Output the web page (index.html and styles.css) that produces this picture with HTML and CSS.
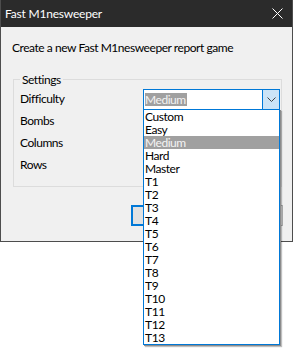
FILE: index.html
```html
<!DOCTYPE html>
<html lang="en">
<head>
    <meta charset="UTF-8">
    <title>Fast M1nesweeper</title>
    <link rel="stylesheet" href="styles.css">
</head>
<body>
    <div class="window">
        <div class="titlebar">
            <span class="title">Fast M1nesweeper</span>
            <svg class="close" width="11" height="11" viewBox="0 0 11 11">
                <path d="M0.5 0.5 L10.5 10.5 M10.5 0.5 L0.5 10.5" stroke="#ffffff" stroke-width="1" fill="none"/>
            </svg>
        </div>

        <div class="content">
            <p class="intro">Create a new Fast M1nesweeper report game</p>

            <div class="settings">
                <span class="legend">Settings</span>
                <div class="row">
                    <label>Difficulty</label>
                    <div class="combo">
                        <div class="combo-value"><span class="selected">Medium</span></div>
                        <div class="combo-button">
                            <svg width="9" height="5" viewBox="0 0 9 5">
                                <path d="M0.5 0.5 L4.5 4.5 L8.5 0.5" stroke="#444444" stroke-width="1" fill="none"/>
                            </svg>
                        </div>
                        <ul class="combo-list">
                            <li>Custom</li>
                            <li>Easy</li>
                            <li class="active">Medium</li>
                            <li>Hard</li>
                            <li>Master</li>
                            <li>T1</li>
                            <li>T2</li>
                            <li>T3</li>
                            <li>T4</li>
                            <li>T5</li>
                            <li>T6</li>
                            <li>T7</li>
                            <li>T8</li>
                            <li>T9</li>
                            <li>T10</li>
                            <li>T11</li>
                            <li>T12</li>
                            <li>T13</li>
                        </ul>
                    </div>
                </div>
                <div class="row"><label>Bombs</label></div>
                <div class="row"><label>Columns</label></div>
                <div class="row"><label>Rows</label></div>
            </div>

            <div class="buttons">
                <button class="btn btn-default">OK</button>
                <button class="btn">Cancel</button>
            </div>
        </div>
    </div>
</body>
</html>
```

FILE: styles.css
```css
* {
    margin: 0;
    padding: 0;
    box-sizing: border-box;
}

html, body {
    min-height: 349px;
}

body {
    font-family: Lato, 'Liberation Sans', Arial, sans-serif;
    font-size: 12px;
    line-height: 15px;
    letter-spacing: -0.45px;
    color: #000000;
    background: #ffffff;
}

.window {
    width: 293px;
    height: 242px;
    border: 1px solid #4d4d4d;
    border-top: none;
    background: #f0f0f0;
    display: flex;
    flex-direction: column;
}

.titlebar {
    height: 27px;
    background: #2b2b2b;
    color: #ffffff;
    letter-spacing: -0.2px;
    display: flex;
    align-items: center;
    justify-content: space-between;
    padding: 0 9px 1px 4px;
}

.close {
    display: block;
    margin-top: 1px;
}

.content {
    flex: 1;
    padding: 13px 9px 0 11px;
}

.intro {
    height: 15px;
    margin-bottom: 24px;
}

/* group box */
.settings {
    border: 1px solid #dcdcdc;
    margin: 0 1px;
    padding: 0 0 12px 6px;
    height: 108px;
}

.settings .legend {
    display: table;
    margin: -8px 0 0 0;
    padding: 0 2px;
    background: #f0f0f0;
}

.row {
    height: 22px;
    display: grid;
    grid-template-columns: 123px 137px;
    align-items: center;
}

.combo {
    position: relative;
    height: 21px;
    margin-top: 2px;
    border: 1px solid #0078d7;
    background: #ffffff;
    display: flex;
}

.combo-value {
    flex: 1;
    display: flex;
    align-items: center;
    padding-left: 1px;
}

.selected {
    background: #a0a0a0;
    color: #f4f4f4;
    padding-right: 1px;
    line-height: 13px;
}

.combo-button {
    width: 17px;
    background: #cce4f7;
    border-left: 1px solid #0078d7;
    display: flex;
    align-items: center;
    justify-content: center;
}

.combo-button svg {
    display: block;
}

/* open dropdown */
.combo-list {
    position: absolute;
    top: 19px;
    left: -1px;
    width: 137px;
    list-style: none;
    background: #ffffff;
    border: 1px solid #0078d7;
    box-shadow: 1px 1px 0 #8c8c8c, 2px 2px 1px rgba(0,0,0,0.25);
    z-index: 2;
}

.combo-list li {
    height: 13px;
    line-height: 13px;
    padding-left: 1px;
}

.combo-list li.active {
    background: #a0a0a0;
    color: #f4f4f4;
}

.buttons {
    display: flex;
    justify-content: flex-end;
    gap: 2px;
    margin-top: 18px;
}

.btn {
    width: 75px;
    height: 21px;
    font: inherit;
    background: #e1e1e1;
    border: 1px solid #adadad;
}

.btn-default {
    border: 2px solid #0078d7;
}
```
